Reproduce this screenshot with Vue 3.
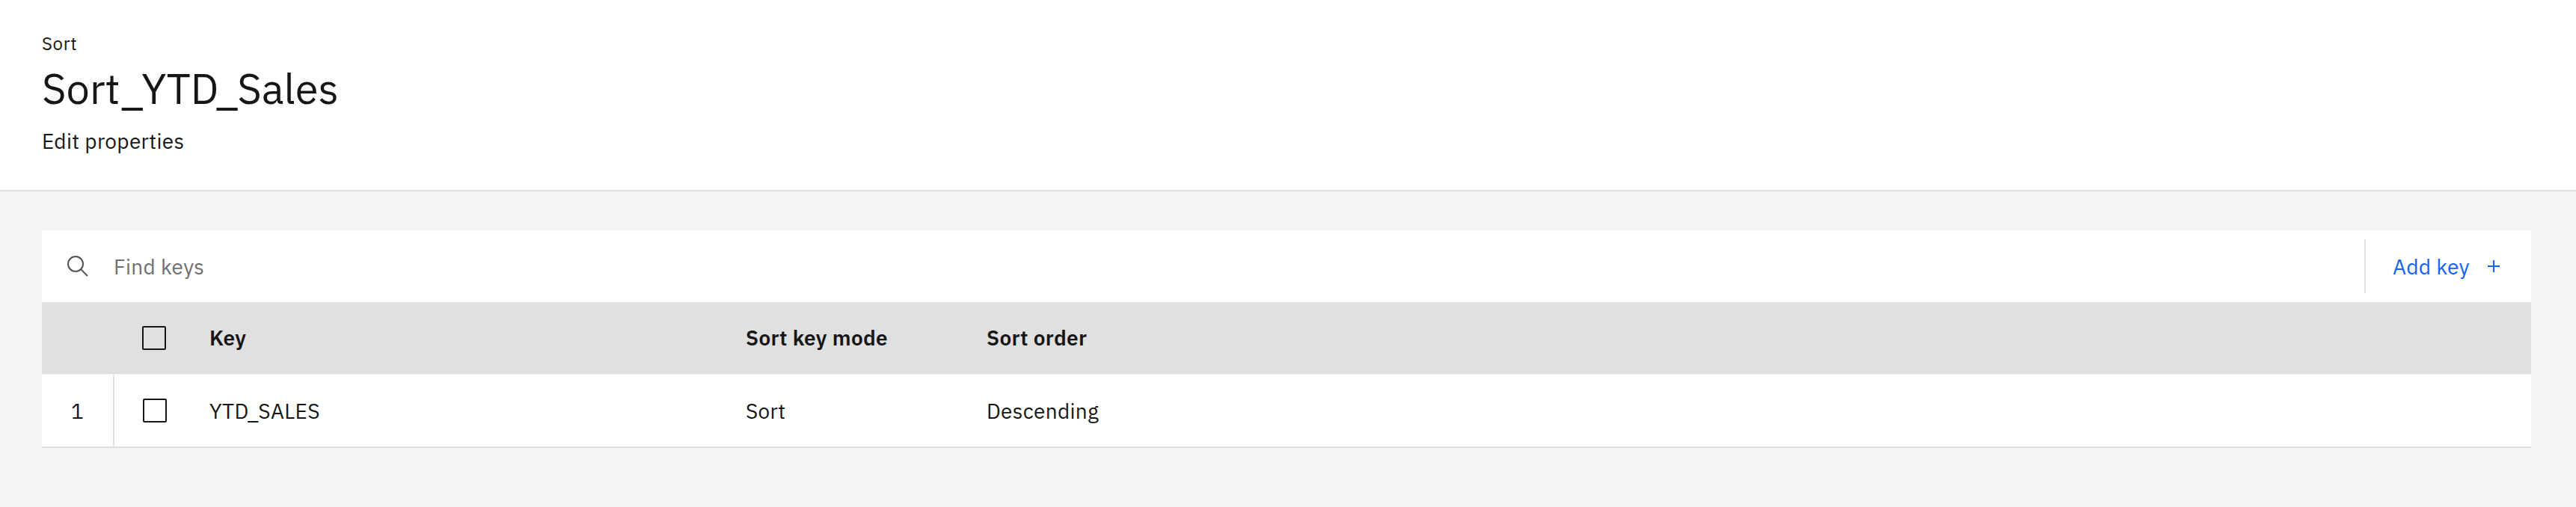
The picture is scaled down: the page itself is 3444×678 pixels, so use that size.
<script setup>
const columns = ['Key', 'Sort key mode', 'Sort order']
const rows = [{ id: 1, key: 'YTD_SALES', mode: 'Sort', order: 'Descending' }]
</script>

<template>
  <div class="page">
    <header class="header">
      <div class="kind">Sort</div>
      <h1 class="title">Sort_YTD_Sales</h1>
      <div class="subtitle">Edit properties</div>
    </header>
    <main class="panel">
      <div class="toolbar">
        <svg class="search" width="32" height="32" viewBox="0 0 32 32">
          <circle cx="13" cy="13" r="10" />
          <path d="M20.1 20.1 29 29" />
        </svg>
        <span class="placeholder">Find keys</span>
        <button class="add">
          <span class="add-label">Add key</span>
          <svg class="plus" width="16" height="16" viewBox="0 0 16 16">
            <path d="M8 0V16M0 8H16" />
          </svg>
        </button>
      </div>
      <div class="row head">
        <span></span>
        <span class="check"><i class="box"></i></span>
        <span v-for="c in columns" :key="c">{{ c }}</span>
      </div>
      <div v-for="r in rows" :key="r.id" class="row body">
        <span class="num"><span class="cell">{{ r.id }}</span></span>
        <span class="check"><i class="box"></i></span>
        <span class="cell">{{ r.key }}</span>
        <span class="cell">{{ r.mode }}</span>
        <span class="cell">{{ r.order }}</span>
      </div>
    </main>
  </div>
</template>

<style>
body {
  background: #f4f4f4;
}
</style>

<style scoped>
.page {
  box-sizing: border-box;
  height: 678px;
  background: #f4f4f4;
  color: #161616;
  font-family: "IBM Plex Sans", Roboto, "Liberation Sans", sans-serif;
  font-size: 28px;
  line-height: 40px;
  letter-spacing: 0.32px;
  white-space: nowrap;
}
.header {
  display: flow-root;
  box-sizing: border-box;
  height: 256px;
  padding: 42px 56px 0;
  background: #fff;
  border-bottom: 2px solid #e0e0e0;
}
.kind {
  font-size: 24px;
  line-height: 32px;
  letter-spacing: 0.64px;
}
.title {
  margin: 8px 0 15px;
  font-size: 56px;
  font-weight: 400;
  line-height: 72px;
  letter-spacing: 0;
}
.panel {
  margin: 52px 60px 0 56px;
}
.toolbar {
  display: flex;
  align-items: center;
  height: 96px;
  padding-left: 32px;
  background: #fff;
}
.search {
  fill: none;
  stroke: #525252;
  stroke-width: 2;
}
.placeholder {
  margin-left: 32px;
  padding-top: 2px;
  color: #6f6f6f;
}
.add {
  display: flex;
  align-items: center;
  justify-content: space-between;
  box-sizing: border-box;
  width: 223px;
  height: 72px;
  margin-left: auto;
  padding: 0 42px 0 36px;
  border: 0;
  border-left: 2px solid #e0e0e0;
  background: none;
  color: #0f62fe;
  font: inherit;
  letter-spacing: inherit;
}
.add-label {
  padding-top: 2px;
}
.plus {
  stroke: #0f62fe;
  stroke-width: 2;
}
.row {
  display: grid;
  grid-template-columns: 97px 127px 717px 322px 1fr;
  align-items: center;
}
.head {
  height: 96px;
  background: #e0e0e0;
  font-weight: 600;
}
.body {
  height: 96px;
  background: #fff;
  border-top: 1px solid #f4f4f4;
  border-bottom: 2px solid #e0e0e0;
}
.check {
  display: flex;
  padding-left: 37px;
}
.body .check {
  padding-left: 38px;
}
.box {
  box-sizing: border-box;
  width: 32px;
  height: 32px;
  border: 2px solid #161616;
  border-radius: 2px;
}
.num {
  display: flex;
  align-items: center;
  justify-content: center;
  box-sizing: border-box;
  height: 96px;
  border-right: 2px solid #e0e0e0;
}
.cell {
  padding-top: 2px;
}
</style>
